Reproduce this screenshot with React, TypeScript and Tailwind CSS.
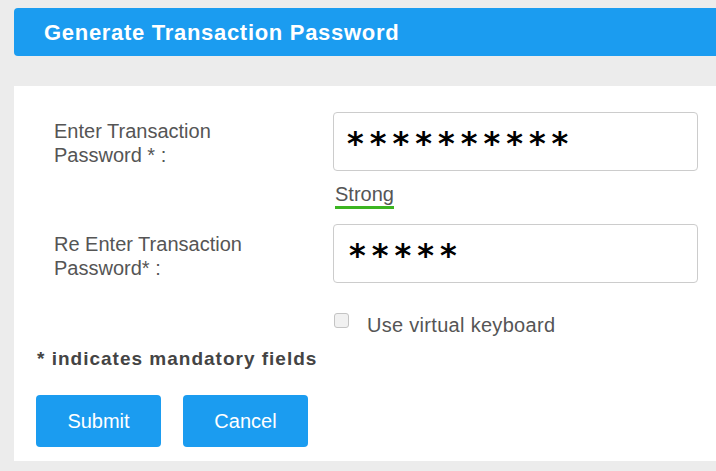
import React, { useState } from 'react';

export default function App() {
  const [pwd] = useState('**********');
  const [pwd2] = useState('*****');
  const [virtualKb, setVirtualKb] = useState(false);

  return (
    <div className="min-h-screen bg-[#ececec] pt-2 pl-[14px] font-['Liberation_Sans',Arial,sans-serif]">
      <div className="h-12 bg-[#1b9cf0] rounded-l-[4px] flex items-center pl-[30px]">
        <h2 className="text-[22px] font-bold tracking-[0.7px] text-white">Generate Transaction Password</h2>
      </div>

      <div className="mt-[30px] bg-white pt-[26px] pb-[14px] pr-[18px]">
        {/* Password row */}
        <div className="flex">
          <label className="w-[319px] pl-10 pt-[7px] text-[20px] leading-6 text-[#555]">
            Enter Transaction
            <br />
            Password * :
          </label>
          <div className="flex-1">
            <input
              type="text"
              readOnly
              value={pwd}
              className="w-full h-[59px] border border-[#ccc] rounded-[4px] pl-[13px] pt-[3px] text-[32px] font-bold tracking-[6px] text-black font-['DejaVu_Sans',sans-serif] outline-none"
            />
            <div className="mt-[11px] pl-[2px]">
              <span className="inline-block text-[20px] leading-6 text-[#555] border-b-[3px] border-[#3cb521]">Strong</span>
            </div>
          </div>
        </div>

        {/* Re-enter row */}
        <div className="flex mt-[15px]">
          <label className="w-[319px] pl-10 pt-2 text-[20px] leading-6 text-[#555]">
            Re Enter Transaction
            <br />
            Password* :
          </label>
          <div className="flex-1">
            <input
              type="text"
              readOnly
              value={pwd2}
              className="w-full h-[59px] border border-[#ccc] rounded-[4px] pl-[15px] pt-[3px] text-[32px] font-bold tracking-[6px] text-black font-['DejaVu_Sans',sans-serif] outline-none"
            />
          </div>
        </div>

        <div className="flex items-start mt-[30px] pl-[320px]">
          <input
            type="checkbox"
            checked={virtualKb}
            onChange={e => setVirtualKb(e.target.checked)}
            className="appearance-none w-[15px] h-[15px] mt-0 border border-[#c4c4c4] rounded-[3px] bg-[#f1f1f1]"
          />
          <span className="ml-[18px] text-[20px] leading-6 tracking-[0.3px] text-[#555]">Use virtual keyboard</span>
        </div>

        <p className="mt-[10px] pl-[23px] text-[19px] leading-6 font-bold tracking-[1px] text-[#444]">* indicates mandatory fields</p>

        <div className="flex gap-[22px] mt-6 pl-[22px]">
          <button className="w-[125px] h-[52px] bg-[#1b9cf0] rounded-[4px] text-white text-[20px]">Submit</button>
          <button className="w-[125px] h-[52px] bg-[#1b9cf0] rounded-[4px] text-white text-[20px]">Cancel</button>
        </div>
      </div>
    </div>
  );
}
